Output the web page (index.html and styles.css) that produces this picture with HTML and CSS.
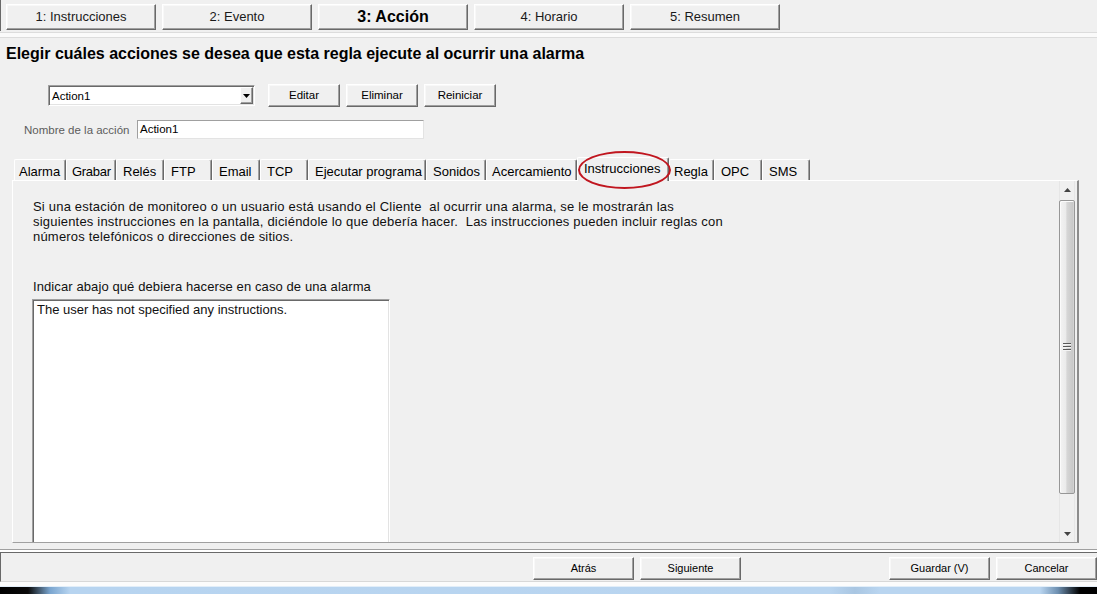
FILE: index.html
```html
<!DOCTYPE html>
<html lang="es">
<head>
<meta charset="utf-8">
<title>Regla - Acción</title>
<link rel="stylesheet" href="styles.css">
</head>
<body>
<div class="window">
  <div class="steps">
    <button class="btn step">1: Instrucciones</button>
    <button class="btn step">2: Evento</button>
    <button class="btn step current">3: Acción</button>
    <button class="btn step">4: Horario</button>
    <button class="btn step">5: Resumen</button>
  </div>
  <div class="sep"></div>
  <h1 class="heading">Elegir cuáles acciones se desea que esta regla ejecute al ocurrir una alarma</h1>
  <div class="action-row">
    <div class="combo">
      <span class="combo-text">Action1</span>
      <span class="combo-arrow"><svg width="7" height="4" viewBox="0 0 7 4"><polygon points="0,0 7,0 3.5,4" fill="#000"/></svg></span>
    </div>
    <button class="btn small first">Editar</button>
    <button class="btn small">Eliminar</button>
    <button class="btn small">Reiniciar</button>
  </div>
  <div class="name-row">
    <span class="name-label">Nombre de la acción</span>
    <div class="field">Action1</div>
  </div>
  <div class="tabs">
    <div class="tab">Alarma</div>
    <div class="tab">Grabar</div>
    <div class="tab">Relés</div>
    <div class="tab">FTP</div>
    <div class="tab">Email</div>
    <div class="tab">TCP</div>
    <div class="tab">Ejecutar programa</div>
    <div class="tab">Sonidos</div>
    <div class="tab">Acercamiento</div>
    <div class="tab selected">Instrucciones<span class="highlight"></span></div>
    <div class="tab">Regla</div>
    <div class="tab">OPC</div>
    <div class="tab">SMS</div>
  </div>
  <div class="panel">
    <div class="panel-body">
      <p class="intro">Si una estación de monitoreo o un usuario está usando el Cliente &nbsp;al ocurrir una alarma, se le mostrarán las<br>siguientes instrucciones en la pantalla, diciéndole lo que debería hacer. &nbsp;Las instrucciones pueden incluir reglas con<br>números telefónicos o direcciones de sitios.</p>
      <div class="prompt">Indicar abajo qué debiera hacerse en caso de una alarma</div>
      <div class="textbox">The user has not specified any instructions.</div>
    </div>
    <div class="scrollbar">
      <div class="sb-btn"><svg width="7" height="4" viewBox="0 0 7 4"><polygon points="3.5,0 7,4 0,4" fill="#444"/></svg></div>
      <div class="sb-track">
        <div class="sb-thumb">
          <svg class="grip" width="8" height="8" viewBox="0 0 8 8">
            <rect x="0" y="0" width="8" height="1" fill="#5a5a5a"/>
            <rect x="0" y="1" width="8" height="1" fill="#f4f4f4"/>
            <rect x="0" y="3" width="8" height="1" fill="#5a5a5a"/>
            <rect x="0" y="4" width="8" height="1" fill="#f4f4f4"/>
            <rect x="0" y="6" width="8" height="1" fill="#5a5a5a"/>
            <rect x="0" y="7" width="8" height="1" fill="#f4f4f4"/>
          </svg>
        </div>
      </div>
      <div class="sb-btn"><svg width="7" height="4" viewBox="0 0 7 4"><polygon points="0,0 7,0 3.5,4" fill="#444"/></svg></div>
    </div>
  </div>
  <div class="footer-sep"></div>
  <div class="footer">
    <button class="btn foot">Atrás</button>
    <button class="btn foot">Siguiente</button>
    <button class="btn foot push">Guardar (V)</button>
    <button class="btn foot">Cancelar</button>
  </div>
  <div class="foot-gap"></div>
  <div class="taskbar"></div>
</div>
</body>
</html>
```
FILE: styles.css
```css
* { box-sizing: border-box; }
html, body { margin: 0; padding: 0; }
body {
  width: 1097px;
  height: 594px;
  overflow: hidden;
  background: #f0f0f0;
  font-family: "Liberation Sans", Arial, sans-serif;
  color: #000;
}
.window { display: flex; flex-direction: column; height: 594px; }

.btn {
  font-family: inherit;
  background: #f0f0f0;
  color: #000;
  border: 1px solid;
  border-color: #fff #696969 #696969 #fff;
  box-shadow: inset -1px -1px 0 #a0a0a0, inset 1px 1px 0 #f8f8f8;
  padding: 0;
  margin: 0;
  line-height: 1;
}

/* wizard steps */
.steps {
  display: flex;
  gap: 6px;
  height: 31px;
  padding: 4px 0 0 5px;
  border-left: 1px solid #696969;
}
.step { width: 150px; height: 26px; font-size: 13px; padding-bottom: 2px; color: #1a1a1a; }
.step.current { font-size: 16px; font-weight: bold; padding-bottom: 1px; color: #000; }
.sep {
  margin-top: 1px;
  height: 6px;
  border-top: 1px solid #dcdcdc;
  border-bottom: 1px solid #dcdcdc;
  background: #fafafa;
}

.heading {
  margin: 6px 0 0 6px;
  font-size: 16px;
  line-height: 19px;
  font-weight: bold;
}

/* action selector */
.action-row {
  display: flex;
  align-items: flex-start;
  margin-top: 21px;
  height: 23px;
  padding-left: 48px;
}
.combo {
  display: flex;
  align-items: center;
  width: 207px;
  height: 21px;
  margin-top: 1px;
  background: #fff;
  border: 1px solid;
  border-color: #a0a0a0 #fff #fff #a0a0a0;
  box-shadow: inset 1px 1px 0 #696969, inset -1px -1px 0 #e3e3e3;
}
.combo-text { font-size: 11.5px; padding-left: 3px; }
.combo-arrow {
  display: flex;
  align-items: center;
  justify-content: center;
  margin-left: auto;
  margin-right: 1px;
  width: 13px;
  height: 17px;
  background: #f0f0f0;
  border: 1px solid;
  border-color: #fff #696969 #696969 #fff;
  box-shadow: inset -1px -1px 0 #a0a0a0;
}
.small { width: 72px; height: 23px; font-size: 11.5px; margin-left: 6px; }
.small.first { margin-left: 13px; }

.name-row {
  display: flex;
  align-items: center;
  margin-top: 13px;
  height: 19px;
  padding-left: 24px;
}
.name-label { width: 113px; font-size: 11.5px; color: #5c5c5c; }
.field {
  width: 287px;
  height: 19px;
  background: #fff;
  border: 1px solid;
  border-color: #a0a0a0 #e3e3e3 #e3e3e3 #a0a0a0;
  font-size: 11.5px;
  line-height: 17px;
  padding-left: 2px;
}

/* tabs */
.tabs {
  display: flex;
  align-items: flex-end;
  margin-top: 20px;
  height: 21px;
  padding-left: 14px;
  position: relative;
  z-index: 1;
}
.tab {
  height: 21px;
  padding: 3px 0 0 6px;
  font-size: 13px;
  line-height: 17px;
  white-space: nowrap;
  border-top: 1px solid #fff;
  border-left: 1px solid #fff;
  border-right: 1px solid #696969;
  box-shadow: inset -1px 0 0 #a0a0a0;
  border-top-left-radius: 2px;
  border-top-right-radius: 2px;
  background: #f0f0f0;
}
.tab:nth-child(1) { width: 52px; padding-left: 4px; }
.tab:nth-child(2) { width: 50px; padding-left: 5px; letter-spacing: -0.3px; }
.tab:nth-child(3),
.tab:nth-child(4),
.tab:nth-child(5),
.tab:nth-child(6),
.tab:nth-child(12),
.tab:nth-child(13) { width: 48px; }
.tab:nth-child(7) { width: 118px; }
.tab:nth-child(8) { width: 60px; }
.tab:nth-child(9) { width: 91px; padding-left: 5px; }
.tab:nth-child(11) { width: 45px; padding-left: 4px; }
.tab.selected {
  width: 92px;
  height: 24px;
  margin-bottom: -1px;
  padding: 2px 0 0 6px;
  position: relative;
  z-index: 2;
}
.highlight {
  position: absolute;
  left: 0;
  top: -7px;
  width: 93px;
  height: 38px;
  border: 2px solid #c0161f;
  border-radius: 50%;
  pointer-events: none;
}

/* panel */
.panel {
  display: flex;
  margin-left: 12px;
  width: 1067px;
  height: 363px;
  border-top: 1px solid #fff;
  border-left: 1px solid #fff;
  border-right: 2px solid #8c8c8c;
  border-bottom: 1px solid #a0a0a0;
}
.panel-body {
  flex: 1;
  overflow: hidden;
  padding: 18px 0 0 20px;
}
.intro {
  margin: 0;
  font-size: 13px;
  line-height: 15px;
  letter-spacing: 0.2px;
  white-space: nowrap;
  color: #111;
}
.prompt {
  margin-top: 35px;
  font-size: 13px;
  line-height: 15px;
  letter-spacing: 0.1px;
  color: #111;
}
.textbox {
  margin: 5px 0 0 -1px;
  width: 358px;
  height: 300px;
  background: #fff;
  border: 1px solid;
  border-color: #a0a0a0 #fff #fff #a0a0a0;
  box-shadow: inset 1px 1px 0 #696969, inset -1px 0 0 #e3e3e3;
  padding: 2px 0 0 4px;
  font-size: 13px;
  line-height: 15px;
  color: #111;
}

.scrollbar {
  display: flex;
  flex-direction: column;
  width: 16px;
  margin-right: 2px;
  border-left: 1px solid #e6e6e6;
  border-right: 1px solid #e6e6e6;
}
.sb-btn {
  height: 17px;
  display: flex;
  align-items: center;
  justify-content: center;
}
.sb-track { flex: 1; }
.sb-thumb {
  margin: 2px -1px 0;
  height: 294px;
  border: 1px solid #979797;
  border-radius: 2px;
  background: linear-gradient(to right, #f3f3f3 0%, #ebebeb 40%, #d6d6d6 50%, #c9c9c9 90%, #d8d8d8 100%);
  box-shadow: inset 1px 1px 0 #fbfbfb;
  display: flex;
  align-items: center;
  justify-content: center;
}

/* footer */
.footer-sep {
  margin-top: 6px;
  height: 4px;
  border-top: 1px solid #a0a0a0;
  border-bottom: 1px solid #696969;
  background: #fff;
}
.footer {
  display: flex;
  gap: 6px;
  height: 29px;
  padding: 4px 0 0 532px;
  border-left: 1px solid #696969;
  border-bottom: 1px solid #d8d8d8;
}
.foot { width: 101px; height: 23px; font-size: 11px; }
.foot.push { margin-left: auto; }
.foot-gap { height: 4px; background: #fcfcfc; }
.taskbar {
  height: 8px;
  border-top: 1px solid #e2eef9;
  background: linear-gradient(to right, #000 0, #0a0a0a 28px, #7aa5cf 50px, #b7d4f0 70px, #b9d5f0 830px, #a9c6e2 855px, #b9d5f0 880px, #b9d5f0 1040px, #6d8fb0 1058px, #000 1080px);
}
```
